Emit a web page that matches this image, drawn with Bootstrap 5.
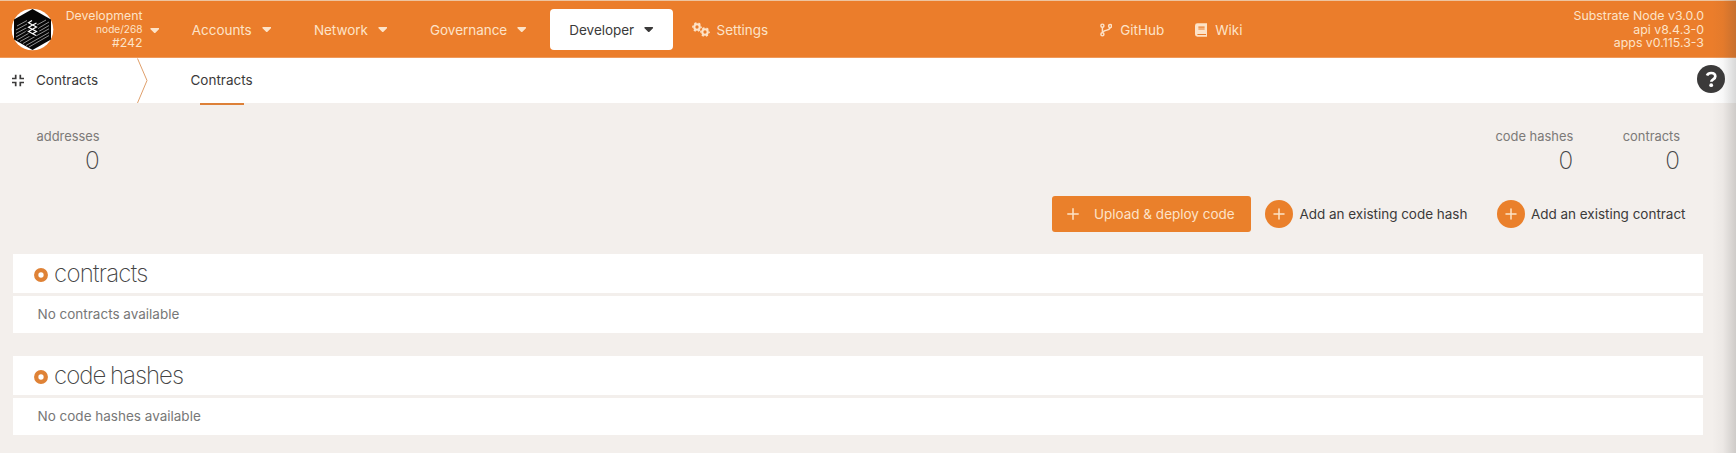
<!DOCTYPE html>
<html lang="en">
<head>
<meta charset="utf-8">
<title>Contracts</title>
<link href="https://cdn.jsdelivr.net/npm/bootstrap@5.3.0/dist/css/bootstrap.min.css" rel="stylesheet">
<script src="https://cdn.jsdelivr.net/npm/bootstrap@5.3.0/dist/js/bootstrap.bundle.min.js"></script>
<style>
:root{--accent:#eb7d2b;--cream:#fde3c8;--ink:#3b3a3a}
body{font-family:Inter,"Liberation Sans",sans-serif;font-size:13.5px;line-height:20px;background:#f3efec;color:var(--ink);height:453px;overflow:hidden;white-space:nowrap}
svg{display:block;flex:none}
.topbar{height:58px;background:var(--accent);border-top:1px solid #edc4a0;box-shadow:inset 0 -1px #ef9a5c;color:var(--cream);padding:0 32px 0 11px}
.chain{width:88.5px;line-height:13.6px;font-size:12.3px}
.chain .node{font-size:10.1px}
.caret{width:9.5px;height:5px}
.chain-caret{margin:1px 32.8px 0 7px}
.menu{gap:42.7px}
.entry{gap:10px;letter-spacing:-.04px}
.active-entry{background:#fff;color:var(--ink);width:122.5px;height:41px;border-radius:4px;margin-left:23.7px;padding-left:19px}
.settings{margin-left:18.7px;gap:7px}
.links{gap:30.5px}
.versions{width:461.5px;font-size:12.35px;line-height:13.6px}
.crumbs{height:45px;background:#fff;padding:0 11px}
.section-name{gap:11px;width:125.5px;padding-bottom:1px}
.tab-item{height:47px;width:62px;margin:2px 0 0 43px;padding-top:11.5px;position:relative}
.tab-item::after{content:"";position:absolute;left:9px;right:9px;bottom:0;height:2px;background:#dd8038}
.stats{padding:24px 56px 0 36.5px;height:93px}
.stat{color:#7c7a78;font-size:12.9px;line-height:20px}
.stat b{display:block;font-weight:200;font-size:24.3px;line-height:26px;color:#444}
.tallies{gap:49.5px}
.actions{padding-right:50.5px;height:36px;margin-bottom:22px}
.deploy{height:36px;width:199px;border-radius:3px;background:#ea802b;color:var(--cream);padding-left:15.5px;gap:14.5px;margin-right:14.5px}
.adder{gap:6px}
.adder+.adder{margin-left:29.5px}
.adder{letter-spacing:-.02px}
.panel-group{margin:0 33px 23px 13px}
.panel-head{height:38.5px;background:#fff;padding-left:20.5px;margin-bottom:3px;gap:6.5px}
.panel-head svg{margin-top:4px}
.panel-head h1{font-size:24px;font-weight:200;line-height:38px;margin:1px 0 0;color:#444;letter-spacing:-.75px;word-spacing:-1px}
.panel-head.tight h1{letter-spacing:-1px}
.panel-body{height:37.5px;background:#fff;padding-left:24.5px;color:#777}
.edge-shade{position:absolute;top:0;right:0;width:24px;height:453px;background:linear-gradient(90deg,transparent,rgba(60,60,60,.04) 45%,rgba(60,60,60,.2))}
</style>
</head>
<body>
<svg width="0" height="0" class="position-absolute"><defs>
<symbol id="caret" viewBox="0 0 9 5"><path d="M.8 0h7.4c.7 0 1 .8.5 1.2L5.2 4.7a1 1 0 0 1-1.400 0L.3 1.200C-.2.8.1 0 .8 0z" fill="currentColor"/></symbol>
<symbol id="plus" viewBox="0 0 12 12"><path d="M6 .8v10.400M.8 6h10.400" stroke="#fde3c8" stroke-width="1.500" stroke-linecap="round"/></symbol>
<symbol id="add" viewBox="0 0 28 28"><circle cx="14" cy="14" r="14" fill="#ea802b"/><path d="M14 9v10M9 14h10" stroke="#fde3c8" stroke-width="1.500" stroke-linecap="round"/></symbol>
<symbol id="ring" viewBox="0 0 14 14"><circle cx="7" cy="7" r="4.800" fill="#fff" stroke="#df8236" stroke-width="4.300"/></symbol>
<symbol id="gear" viewBox="0 0 10 10"><circle cx="5" cy="5" r="2.700" fill="none" stroke="currentColor" stroke-width="2.100"/><circle cx="5" cy="5" r="4.100" fill="none" stroke="currentColor" stroke-width="1.500" stroke-dasharray="2.147" stroke-dashoffset="1.070"/></symbol>
<clipPath id="hex"><path d="M21.500 1 40 11.500v20L21.500 42 3 31.500v-20z"/></clipPath>
</defs></svg>

<header class="topbar d-flex align-items-center">
  <svg width="43" height="43" viewBox="0 0 43 43"><circle cx="21.5" cy="21.5" r="20.8" fill="#fff"/><g clip-path="url(#hex)"><path fill="#060606" d="M0 0h43v43H0z"/><path d="M6 18l10-5.500M5 22l11-6M5 25.500l12-6.500M5 29l14-8M6 32l14-8M9 33.500l12-6.500M12 35.500l12-7M15 37.500l23-13M18 39l20-11.500M26 24.500l12-7M25 28l13-7.200M27 20.500l11-6.500M26 17l9-5" stroke="#b5b5b5" stroke-width=".8"/></g><path d="M17.500 14.500l4-2M17.500 14.500l8 4.500-8 4.500 7 4M25.500 15l-8 4.200 8 4.300-7.500 4" fill="none" stroke="#060606" stroke-width="3.200"/><path d="M21 12.500l-3.500 2.200 8 4.300-8 4.500 7.500 4M25.500 15l-8 4.200 8 4.300-4 2.200" fill="none" stroke="#fff" stroke-width="1.200"/></svg>
  <div class="chain text-end"><div>Development</div><div class="node">node/268</div><div>#242</div></div>
  <svg class="caret chain-caret"><use href="#caret"/></svg>
  <nav class="menu d-flex align-items-center">
    <div class="entry d-flex align-items-center">Accounts<svg class="caret"><use href="#caret"/></svg></div>
    <div class="entry d-flex align-items-center">Network<svg class="caret"><use href="#caret"/></svg></div>
    <div class="entry d-flex align-items-center">Governance<svg class="caret"><use href="#caret"/></svg></div>
  </nav>
  <div class="entry active-entry d-flex align-items-center">Developer<svg class="caret"><use href="#caret"/></svg></div>
  <div class="settings d-flex align-items-center"><svg width="18" height="16"><use href="#gear" width="10" height="10"/><use href="#gear" x="8" y="5" width="10" height="10"/></svg>Settings</div>
  <div class="links d-flex align-items-center ms-auto">
    <div class="d-flex align-items-center gap-2"><svg width="12.5" height="14" viewBox="0 0 13 14" fill="none" stroke="currentColor" stroke-width="1.5"><circle cx="2.500" cy="2.500" r="1.600"/><circle cx="2.500" cy="11.500" r="1.600"/><circle cx="10.500" cy="2.900" r="1.600"/><path d="M2.500 4v6M10.500 4.500c0 3.500-5 1.700-7.500 4.500"/></svg>GitHub</div>
    <div class="d-flex align-items-center gap-2"><svg width="12.5" height="14" viewBox="0 0 13 14"><path d="M2.500 0H12c.6 0 1 .4 1 1v9c0 .4-.2.700-.5.900v1.500c.3.200.5.400.5.800s-.3.800-.8.800H2.500A2.500 2.500 0 0 1 0 11.500v-9A2.500 2.500 0 0 1 2.500 0z" fill="currentColor"/><path d="M3.500 4h6.500M3.500 6h6.500M2.500 11.700h9" stroke="#eb7d2b" stroke-width="1.100"/></svg>Wiki</div>
  </div>
  <div class="versions text-end">Substrate Node v3.0.0<br>api v8.4.3-0<br>apps v0.115.3-3</div>
</header>

<div class="crumbs d-flex align-items-center">
  <div class="section-name d-flex align-items-center"><svg width="14" height="13" viewBox="0 0 14 13" fill="none" stroke="currentColor" stroke-width="1.7"><path d="M1 4.500h3.700V.8M9.300.8v3.700H13M1 8.500h3.700v3.700M9.300 12.200V8.500H13"/></svg>Contracts</div>
  <svg width="11" height="45" viewBox="0 0 11 45"><path d="M.5.5 10 22.500.5 45" fill="none" stroke="#df9f6b"/></svg>
  <div class="tab-item">Contracts</div>
  <svg class="ms-auto mb-1" width="28" height="28" viewBox="0 0 28 28"><circle cx="14" cy="14" r="14" fill="#3b3a3a"/><path d="M10 10.500C10.800 8.700 12.200 8 14.100 8c2.500 0 4.200 1.400 4.200 3.400 0 2.900-4 2.800-4 5.400" fill="none" stroke="#fff" stroke-width="2.700"/><circle cx="14.200" cy="20.200" r="1.900" fill="#fff"/></svg>
</div>

<main>
  <div class="stats d-flex justify-content-between">
    <div class="stat text-end">addresses<b>0</b></div>
    <div class="tallies d-flex"><div class="stat text-end">code hashes<b>0</b></div><div class="stat text-end">contracts<b>0</b></div></div>
  </div>
  <div class="actions d-flex justify-content-end align-items-center">
    <div class="deploy d-flex align-items-center"><svg width="12" height="12"><use href="#plus"/></svg>Upload &amp; deploy code</div>
    <div class="adder d-flex align-items-center"><svg width="28" height="28"><use href="#add"/></svg>Add an existing code hash</div>
    <div class="adder d-flex align-items-center"><svg width="28" height="28"><use href="#add"/></svg>Add an existing contract</div>
  </div>
  <section class="panel-group">
    <div class="panel-head d-flex align-items-center"><svg width="14" height="14"><use href="#ring"/></svg><h1>contracts</h1></div>
    <div class="panel-body d-flex align-items-center">No contracts available</div>
  </section>
  <section class="panel-group">
    <div class="panel-head tight d-flex align-items-center"><svg width="14" height="14"><use href="#ring"/></svg><h1>code hashes</h1></div>
    <div class="panel-body d-flex align-items-center">No code hashes available</div>
  </section>
</main>
<div class="edge-shade"></div>
</body>
</html>
